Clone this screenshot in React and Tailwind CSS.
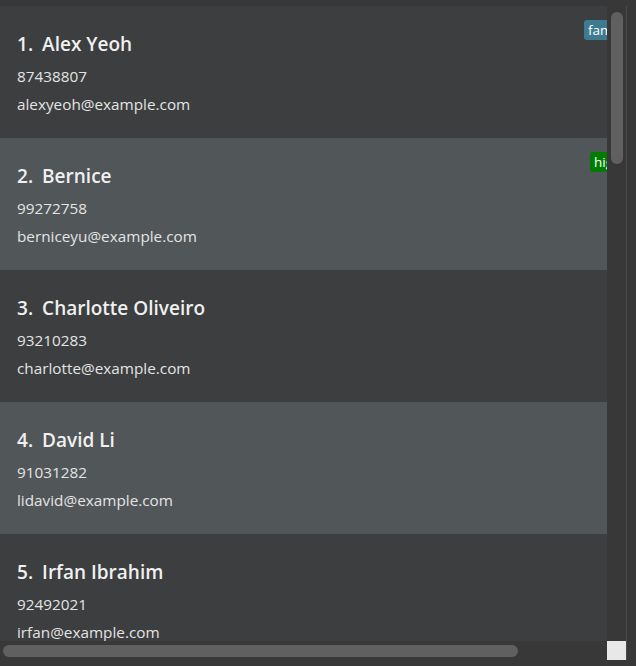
const people = [
  { name: 'Alex Yeoh', phone: '87438807', email: 'alexyeoh@example.com', tag: 'family', tagBg: 'bg-[#3e7b91]', tagLeft: 'left-[584px]' },
  { name: 'Bernice', phone: '99272758', email: 'berniceyu@example.com', tag: 'high', tagBg: 'bg-[#007d00]', tagLeft: 'left-[590px]' },
  { name: 'Charlotte Oliveiro', phone: '93210283', email: 'charlotte@example.com' },
  { name: 'David Li', phone: '91031282', email: 'lidavid@example.com' },
  { name: 'Irfan Ibrahim', phone: '92492021', email: 'irfan@example.com' },
];

function PersonCard({ person, index }) {
  const bg = index % 2 === 0 ? 'bg-[#3c3e3f]' : 'bg-[#515658]';
  return (
    <div className={`relative h-[132px] shrink-0 ${bg}`}>
      <div className="pl-[17px] pt-[24px]">
        <div className="flex h-[28px] items-center text-[19px] font-semibold text-[#f0f0f0]">
          <span>{index + 1}.</span>
          <span className="ml-[9px]">{person.name}</span>
        </div>
        <div className="mt-[4px] flex h-[28px] items-center text-[15.3px] text-[#e4e4e4]">{person.phone}</div>
        <div className="flex h-[28px] items-center text-[15.3px] text-[#e4e4e4]">{person.email}</div>
      </div>
      {/* tag pills run past the viewport edge and get clipped, as in the app */}
      {person.tag && (
        <div
          className={`absolute top-[14px] ${person.tagLeft} whitespace-nowrap rounded-[3px] px-[4px] h-[20px] leading-[20px] text-[13.5px] text-white ${person.tagBg}`}
        >
          {person.tag}
        </div>
      )}
    </div>
  );
}

export default function App() {
  return (
    <div className="flex h-[666px] w-[636px] flex-col bg-[#383838] pt-[6px] font-['Open_Sans',sans-serif]">
      <div className="flex h-[635px] shrink-0">
        {/* list viewport */}
        <div className="flex w-[607px] flex-col overflow-hidden">
          {people.map((p, i) => (
            <PersonCard key={p.name} person={p} index={i} />
          ))}
        </div>
        {/* vertical scrollbar */}
        <div className="w-[19px] bg-[#383838] pl-[4px] pt-[6px]">
          <div className="h-[152px] w-[12px] rounded-[6px] bg-[#606060]" />
        </div>
        <div className="w-px bg-[#4a4a4a]" />
      </div>
      {/* horizontal scrollbar */}
      <div className="flex h-[19px]">
        <div className="w-[607px] pl-[3px] pt-[4px]">
          <div className="h-[12px] w-[515px] rounded-[6px] bg-[#606060]" />
        </div>
        <div className="h-[19px] w-[19px] bg-[#e8e8e8]" />
        <div className="w-px bg-[#4a4a4a]" />
      </div>
    </div>
  );
}
